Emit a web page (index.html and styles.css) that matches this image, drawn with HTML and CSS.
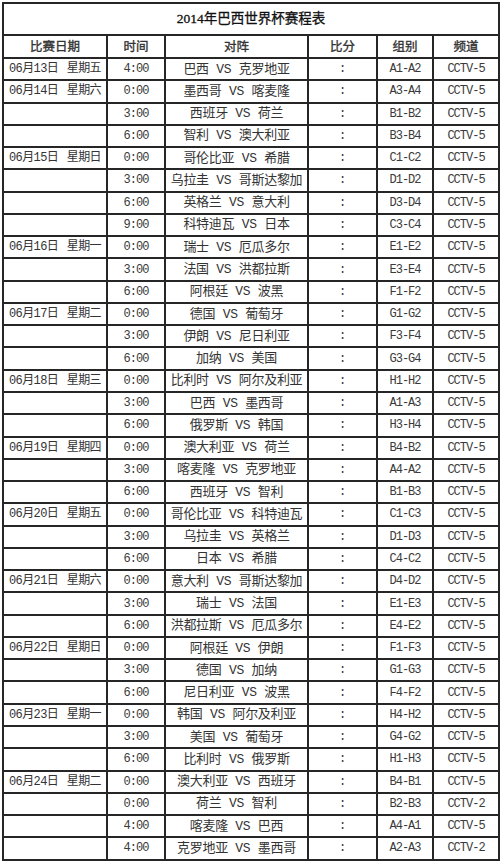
FILE: index.html
```html
<!DOCTYPE html>
<html lang="zh-CN">
<head>
<meta charset="utf-8">
<title>2014年巴西世界杯赛程表</title>
<link rel="stylesheet" href="styles.css">
</head>
<body>
<table class="sched">
<colgroup>
<col class="c-date"><col class="c-time"><col class="c-match"><col class="c-score"><col class="c-group"><col class="c-chan">
</colgroup>
<thead>
<tr class="title-row"><th colspan="6" class="title">2014年巴西世界杯赛程表</th></tr>
<tr class="head-row"><th>比赛日期</th><th>时间</th><th>对阵</th><th>比分</th><th>组别</th><th>频道</th></tr>
</thead>
<tbody>
<tr><td class="date">06月13日 星期五</td><td class="lat">4:00</td><td class="match">巴西 VS 克罗地亚</td><td class="score">:</td><td class="lat">A1-A2</td><td class="lat">CCTV-5</td></tr>
<tr><td class="date">06月14日 星期六</td><td class="lat">0:00</td><td class="match">墨西哥 VS 喀麦隆</td><td class="score">:</td><td class="lat">A3-A4</td><td class="lat">CCTV-5</td></tr>
<tr><td class="date"></td><td class="lat">3:00</td><td class="match">西班牙 VS 荷兰</td><td class="score">:</td><td class="lat">B1-B2</td><td class="lat">CCTV-5</td></tr>
<tr><td class="date"></td><td class="lat">6:00</td><td class="match">智利 VS 澳大利亚</td><td class="score">:</td><td class="lat">B3-B4</td><td class="lat">CCTV-5</td></tr>
<tr><td class="date">06月15日 星期日</td><td class="lat">0:00</td><td class="match">哥伦比亚 VS 希腊</td><td class="score">:</td><td class="lat">C1-C2</td><td class="lat">CCTV-5</td></tr>
<tr><td class="date"></td><td class="lat">3:00</td><td class="match">乌拉圭 VS 哥斯达黎加</td><td class="score">:</td><td class="lat">D1-D2</td><td class="lat">CCTV-5</td></tr>
<tr><td class="date"></td><td class="lat">6:00</td><td class="match">英格兰 VS 意大利</td><td class="score">:</td><td class="lat">D3-D4</td><td class="lat">CCTV-5</td></tr>
<tr><td class="date"></td><td class="lat">9:00</td><td class="match">科特迪瓦 VS 日本</td><td class="score">:</td><td class="lat">C3-C4</td><td class="lat">CCTV-5</td></tr>
<tr><td class="date">06月16日 星期一</td><td class="lat">0:00</td><td class="match">瑞士 VS 厄瓜多尔</td><td class="score">:</td><td class="lat">E1-E2</td><td class="lat">CCTV-5</td></tr>
<tr><td class="date"></td><td class="lat">3:00</td><td class="match">法国 VS 洪都拉斯</td><td class="score">:</td><td class="lat">E3-E4</td><td class="lat">CCTV-5</td></tr>
<tr><td class="date"></td><td class="lat">6:00</td><td class="match">阿根廷 VS 波黑</td><td class="score">:</td><td class="lat">F1-F2</td><td class="lat">CCTV-5</td></tr>
<tr><td class="date">06月17日 星期二</td><td class="lat">0:00</td><td class="match">德国 VS 葡萄牙</td><td class="score">:</td><td class="lat">G1-G2</td><td class="lat">CCTV-5</td></tr>
<tr><td class="date"></td><td class="lat">3:00</td><td class="match">伊朗 VS 尼日利亚</td><td class="score">:</td><td class="lat">F3-F4</td><td class="lat">CCTV-5</td></tr>
<tr><td class="date"></td><td class="lat">6:00</td><td class="match">加纳 VS 美国</td><td class="score">:</td><td class="lat">G3-G4</td><td class="lat">CCTV-5</td></tr>
<tr><td class="date">06月18日 星期三</td><td class="lat">0:00</td><td class="match">比利时 VS 阿尔及利亚</td><td class="score">:</td><td class="lat">H1-H2</td><td class="lat">CCTV-5</td></tr>
<tr><td class="date"></td><td class="lat">3:00</td><td class="match">巴西 VS 墨西哥</td><td class="score">:</td><td class="lat">A1-A3</td><td class="lat">CCTV-5</td></tr>
<tr><td class="date"></td><td class="lat">6:00</td><td class="match">俄罗斯 VS 韩国</td><td class="score">:</td><td class="lat">H3-H4</td><td class="lat">CCTV-5</td></tr>
<tr><td class="date">06月19日 星期四</td><td class="lat">0:00</td><td class="match">澳大利亚 VS 荷兰</td><td class="score">:</td><td class="lat">B4-B2</td><td class="lat">CCTV-5</td></tr>
<tr><td class="date"></td><td class="lat">3:00</td><td class="match">喀麦隆 VS 克罗地亚</td><td class="score">:</td><td class="lat">A4-A2</td><td class="lat">CCTV-5</td></tr>
<tr><td class="date"></td><td class="lat">6:00</td><td class="match">西班牙 VS 智利</td><td class="score">:</td><td class="lat">B1-B3</td><td class="lat">CCTV-5</td></tr>
<tr><td class="date">06月20日 星期五</td><td class="lat">0:00</td><td class="match">哥伦比亚 VS 科特迪瓦</td><td class="score">:</td><td class="lat">C1-C3</td><td class="lat">CCTV-5</td></tr>
<tr><td class="date"></td><td class="lat">3:00</td><td class="match">乌拉圭 VS 英格兰</td><td class="score">:</td><td class="lat">D1-D3</td><td class="lat">CCTV-5</td></tr>
<tr><td class="date"></td><td class="lat">6:00</td><td class="match">日本 VS 希腊</td><td class="score">:</td><td class="lat">C4-C2</td><td class="lat">CCTV-5</td></tr>
<tr><td class="date">06月21日 星期六</td><td class="lat">0:00</td><td class="match">意大利 VS 哥斯达黎加</td><td class="score">:</td><td class="lat">D4-D2</td><td class="lat">CCTV-5</td></tr>
<tr><td class="date"></td><td class="lat">3:00</td><td class="match">瑞士 VS 法国</td><td class="score">:</td><td class="lat">E1-E3</td><td class="lat">CCTV-5</td></tr>
<tr><td class="date"></td><td class="lat">6:00</td><td class="match">洪都拉斯 VS 厄瓜多尔</td><td class="score">:</td><td class="lat">E4-E2</td><td class="lat">CCTV-5</td></tr>
<tr><td class="date">06月22日 星期日</td><td class="lat">0:00</td><td class="match">阿根廷 VS 伊朗</td><td class="score">:</td><td class="lat">F1-F3</td><td class="lat">CCTV-5</td></tr>
<tr><td class="date"></td><td class="lat">3:00</td><td class="match">德国 VS 加纳</td><td class="score">:</td><td class="lat">G1-G3</td><td class="lat">CCTV-5</td></tr>
<tr><td class="date"></td><td class="lat">6:00</td><td class="match">尼日利亚 VS 波黑</td><td class="score">:</td><td class="lat">F4-F2</td><td class="lat">CCTV-5</td></tr>
<tr><td class="date">06月23日 星期一</td><td class="lat">0:00</td><td class="match">韩国 VS 阿尔及利亚</td><td class="score">:</td><td class="lat">H4-H2</td><td class="lat">CCTV-5</td></tr>
<tr><td class="date"></td><td class="lat">3:00</td><td class="match">美国 VS 葡萄牙</td><td class="score">:</td><td class="lat">G4-G2</td><td class="lat">CCTV-5</td></tr>
<tr><td class="date"></td><td class="lat">6:00</td><td class="match">比利时 VS 俄罗斯</td><td class="score">:</td><td class="lat">H1-H3</td><td class="lat">CCTV-5</td></tr>
<tr><td class="date">06月24日 星期二</td><td class="lat">0:00</td><td class="match">澳大利亚 VS 西班牙</td><td class="score">:</td><td class="lat">B4-B1</td><td class="lat">CCTV-5</td></tr>
<tr><td class="date"></td><td class="lat">0:00</td><td class="match">荷兰 VS 智利</td><td class="score">:</td><td class="lat">B2-B3</td><td class="lat">CCTV-2</td></tr>
<tr><td class="date"></td><td class="lat">4:00</td><td class="match">喀麦隆 VS 巴西</td><td class="score">:</td><td class="lat">A4-A1</td><td class="lat">CCTV-5</td></tr>
<tr><td class="date"></td><td class="lat">4:00</td><td class="match">克罗地亚 VS 墨西哥</td><td class="score">:</td><td class="lat">A2-A3</td><td class="lat">CCTV-2</td></tr>
</tbody>
</table>
</body>
</html>
```
FILE: styles.css
```css
html, body {
  margin: 0;
  padding: 0;
  background: #fff;
}
body {
  padding: 2px 0 0 2px;
}
.sched {
  border-collapse: collapse;
  table-layout: fixed;
  width: 496px;
  font-family: "Liberation Mono", "Noto Sans CJK SC", monospace;
  font-size: 12px;
  color: #333;
}
.c-date { width: 104px; }
.c-time { width: 58px; }
.c-match { width: 143px; }
.c-score { width: 69px; }
.c-group { width: 56px; }
.c-chan { width: 66px; }

.sched th,
.sched td {
  border: 2px solid #262626;
  padding: 0;
  text-align: center;
  vertical-align: middle;
  white-space: nowrap;
  overflow: hidden;
  line-height: 1;
}
.title-row { height: 32px; }
.head-row { height: 23px; }
.sched tbody tr { height: 22.28px; }

.title {
  font-family: "Liberation Serif", "Noto Sans CJK SC", serif;
  font-size: 13.5px;
  font-weight: normal;
  color: #111;
  -webkit-text-stroke: 0.3px #111;
}
.head-row th {
  font-family: "Noto Sans CJK SC", sans-serif;
  font-size: 12.5px;
  font-weight: normal;
  color: #333;
  -webkit-text-stroke: 0.35px #333;
}
.sched td.date {
  text-align: left;
  padding-left: 5px;
  font-size: 12px;
  letter-spacing: -0.6px;
  word-spacing: 2px;
}
.sched td.lat {
  font-size: 12px;
  letter-spacing: -1px;
  color: #3a3a3a;
}
.sched td.match {
  font-size: 13px;
  letter-spacing: -0.3px;
}
.sched td.score {
  font-size: 12px;
}
```
